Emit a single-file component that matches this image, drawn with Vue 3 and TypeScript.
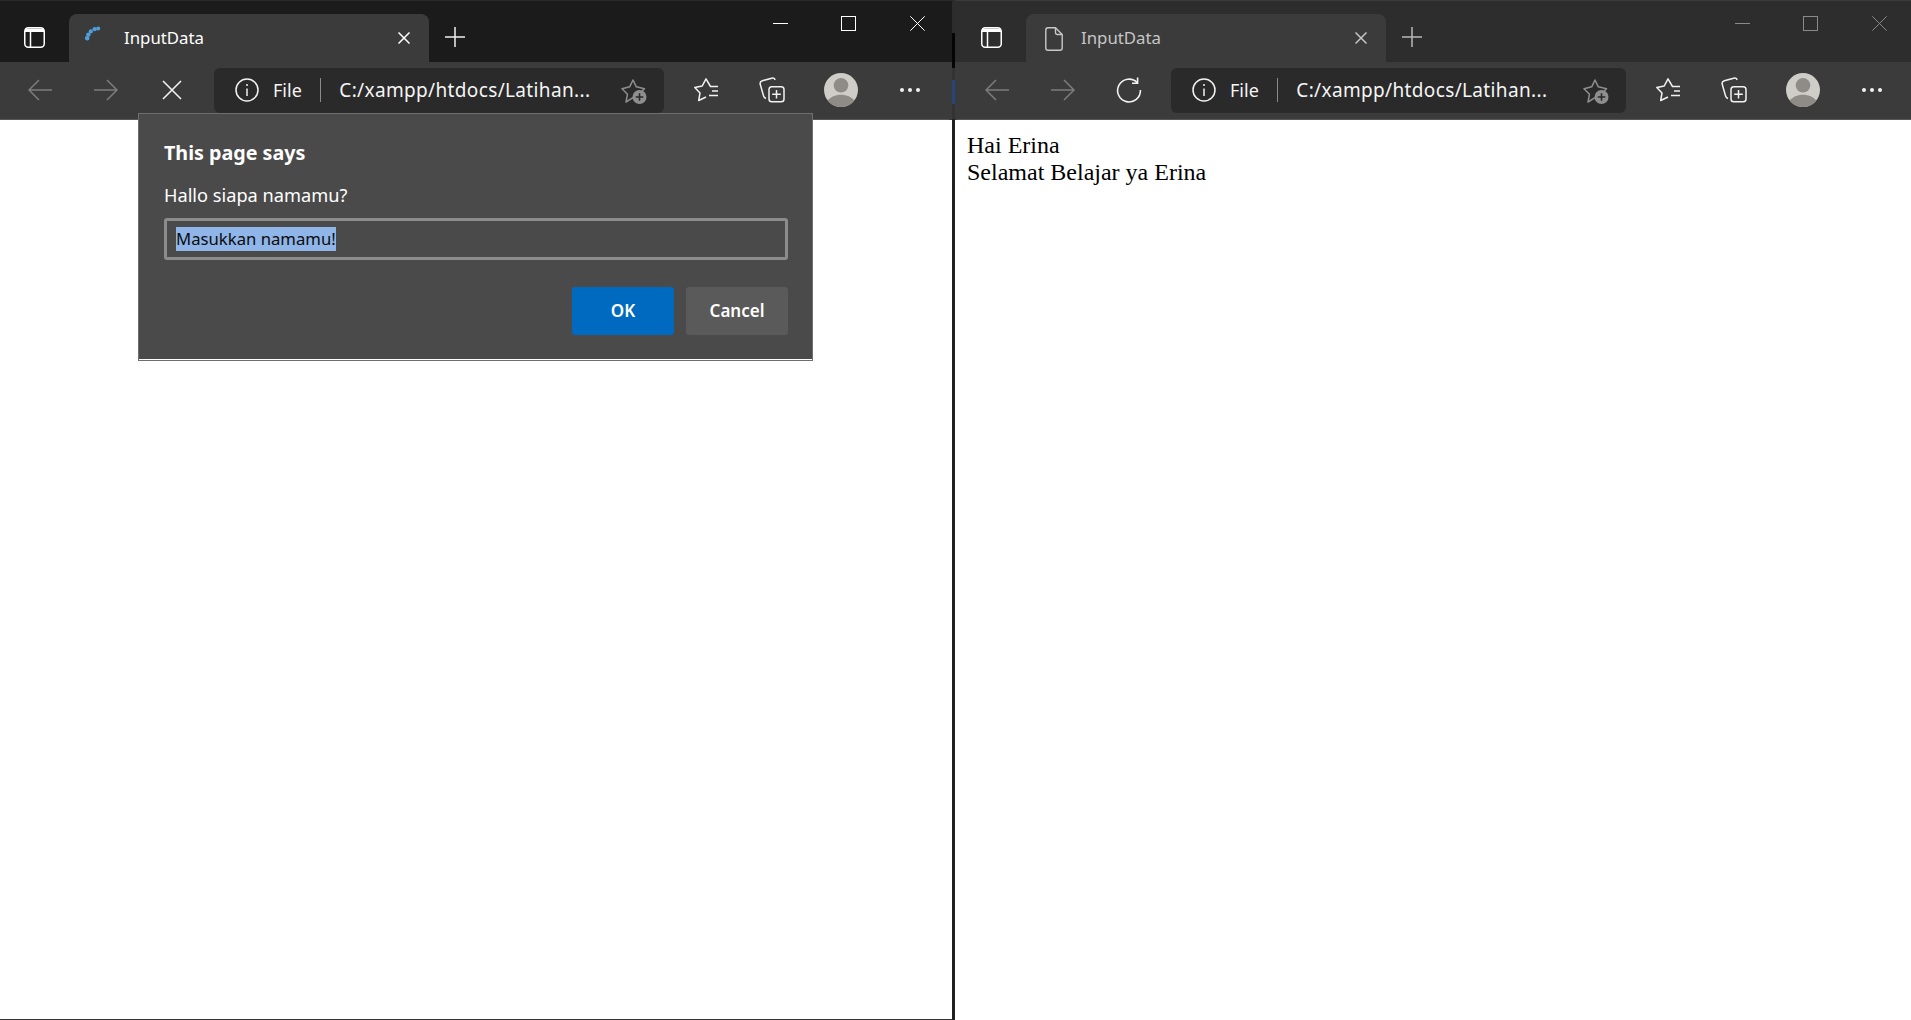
<script setup lang="ts">
interface BrowserWindow {
  key: string
  focused: boolean
  loading: boolean
  lines: string[]
}

const windows: BrowserWindow[] = [
  { key: 'prompt', focused: true, loading: true, lines: [] },
  { key: 'result', focused: false, loading: false, lines: ['Hai Erina', 'Selamat Belajar ya Erina'] },
]
</script>

<template>
  <div class="desktop">
    <template v-for="(win, i) in windows" :key="win.key">
      <div v-if="i > 0" class="seam"></div>
      <section class="win" :class="win.focused ? 'win--focused' : 'win--blurred'">
        <header class="titlebar">
          <span class="sidebar-btn">
            <svg width="21" height="21" viewBox="0 0 21 21" fill="none" stroke="#fff" stroke-width="1.5">
              <rect x=".75" y=".75" width="19.5" height="19.5" rx="3.5" />
              <path d="M1 1.5h19V5H1z" fill="#fff" stroke="none" />
              <path d="M6.5 5v15" />
            </svg>
          </span>
          <div class="tab">
            <svg v-if="win.loading" class="tab__icon" width="18" height="18" viewBox="0 0 18 18" fill="#4f9fdc">
              <circle cx="2.2" cy="13.2" r="2.3" />
              <circle cx="3.4" cy="9.6" r="2.2" />
              <circle cx="5.8" cy="6.4" r="2.1" />
              <circle cx="9.6" cy="4.2" r="2.1" />
              <circle cx="13.2" cy="3.4" r="2" />
            </svg>
            <svg v-else class="tab__icon tab__icon--doc" width="18" height="24" viewBox="0 0 18 24" fill="none" stroke="#c8c8c8" stroke-width="1.4" stroke-linejoin="round">
              <path d="M3 .8h7.5L17.2 7.5V21a2.2 2.2 0 0 1-2.2 2.2H3A2.2 2.2 0 0 1 .8 21V3A2.2 2.2 0 0 1 3 .8Z" />
              <path d="M10.5 .8v5a1.7 1.7 0 0 0 1.7 1.7h5" />
            </svg>
            <span class="tab__title">InputData</span>
            <svg class="tab__close" width="12" height="12" viewBox="0 0 12 12" stroke-width="1.5">
              <path d="M.5.5l11 11M11.5.5l-11 11" />
            </svg>
          </div>
          <svg class="newtab" width="20" height="20" viewBox="0 0 20 20" stroke-width="1.5">
            <path d="M10 0v20M0 10h20" />
          </svg>
          <div class="controls">
            <svg width="15" height="15" viewBox="0 0 15 15"><path d="M0 7.5h15" /></svg>
            <svg width="15" height="15" viewBox="0 0 15 15" fill="none"><rect x=".5" y=".5" width="14" height="14" /></svg>
            <svg class="controls__close" width="15" height="15" viewBox="0 0 15 15"><path d="M.3.3l14.4 14.4M14.7.3L.3 14.7" /></svg>
          </div>
        </header>

        <div class="toolbar">
          <span class="tool">
            <svg width="24" height="22" viewBox="0 0 24 22" fill="none" stroke="#7d7d7d" stroke-width="1.5">
              <path d="M24 11H1M11 1 1 11l10 10" />
            </svg>
          </span>
          <span class="tool">
            <svg width="24" height="22" viewBox="0 0 24 22" fill="none" stroke="#7d7d7d" stroke-width="1.5">
              <path d="M0 11h23M13 1l10 10-10 10" />
            </svg>
          </span>
          <span class="tool">
            <svg v-if="win.loading" width="20" height="20" viewBox="0 0 20 20" stroke="#f2f2f2" stroke-width="1.6">
              <path d="M1 1l18 18M19 1 1 19" />
            </svg>
            <svg v-else width="26" height="26" viewBox="0 0 26 26" fill="none" stroke="#f2f2f2" stroke-width="1.6">
              <path d="M21.2 5.6A11.4 11.4 0 1 0 24.4 13" />
              <path d="M21.6 .6v5.6h-5.6" />
            </svg>
          </span>

          <div class="address">
            <svg class="address__info" width="24" height="24" viewBox="0 0 24 24" fill="none" stroke="#f2f2f2" stroke-width="1.5">
              <circle cx="12" cy="12" r="11" />
              <path d="M12 10.5V18" />
              <circle cx="12" cy="7" r="1" fill="#f2f2f2" stroke="none" />
            </svg>
            <span class="address__scheme">File</span>
            <span class="address__rule"></span>
            <span class="address__url">C:/xampp/htdocs/Latihan...</span>
            <svg class="address__star" width="27" height="26" viewBox="0 0 27 26">
              <path d="M12 1 15.3 7.8 23.5 9.8 17.8 15.2 19.2 22 12 18.6 5 23 6.5 15.2 1 9.8 8.7 7.8Z" fill="none" stroke="#8e8e8e" stroke-width="1.5" stroke-linejoin="round" />
              <circle cx="18.5" cy="18" r="7" fill="#8e8e8e" />
              <path d="M18.5 14.2v7.6M14.7 18h7.6" stroke="#2a2a2a" stroke-width="1.6" />
            </svg>
          </div>

          <span class="tool tool--first">
            <svg width="24" height="24" viewBox="0 0 24 24" fill="none" stroke="#f2f2f2" stroke-width="1.5" stroke-linejoin="round">
              <path d="M24 8.5H16.5L12 .8 8.2 8 .8 9.5 6 15 4.7 22.5 12 19" />
              <path d="M18 13H24M15 17.5H24" />
            </svg>
          </span>
          <span class="tool">
            <svg width="26" height="26" viewBox="0 0 26 26" fill="none" stroke="#f2f2f2" stroke-width="1.5" stroke-linejoin="round">
              <path d="M7 21.5C5.8 21.2 5 20.3 4.6 19.1L1.3 7.5C.8 5.8 1.6 4.3 3.3 3.8L12.7 1.2C14.2 .8 15.6 1.5 16.2 2.9" />
              <rect x="10" y="9.8" width="15" height="15" rx="2.8" />
              <path d="M17.5 13v8.5M13.2 17.3h8.6" />
            </svg>
          </span>
          <span class="tool tool--profile">
            <svg width="34" height="34" viewBox="0 0 34 34">
              <circle cx="17" cy="17" r="17" fill="#cfcdc8" />
              <circle cx="17" cy="12.3" r="7.3" fill="#8f8c87" />
              <path d="M3.8 27.7C6.5 24 11 21.8 17 21.8S27.500 24 30.200 27.700A17 17 0 0 1 17 34 17 17 0 0 1 3.800 27.700Z" fill="#8f8c87" />
            </svg>
          </span>
          <span class="tool">
            <svg width="20" height="4" viewBox="0 0 20 4" fill="#f2f2f2">
              <circle cx="2" cy="2" r="2" />
              <circle cx="10" cy="2" r="2" />
              <circle cx="18" cy="2" r="2" />
            </svg>
          </span>
        </div>

        <main class="page">
          <div v-for="line in win.lines" :key="line">{{ line }}</div>
        </main>

        <div v-if="win.loading" class="dialog">
          <h2 class="dialog__title">This page says</h2>
          <p class="dialog__msg">Hallo siapa namamu?</p>
          <div class="dialog__input"><span class="dialog__selected">Masukkan namamu!</span></div>
          <div class="dialog__actions">
            <button type="button" class="dialog__btn dialog__btn--primary">OK</button>
            <button type="button" class="dialog__btn">Cancel</button>
          </div>
        </div>
      </section>
    </template>
  </div>
</template>

<style scoped>
.desktop {
  display: flex;
  height: 1020px;
  overflow: hidden;
  background: #fff;
  font-family: "Noto Sans", "Open Sans", sans-serif;
}

.seam {
  flex: 0 0 3px;
  background: linear-gradient(#2c2c2c 0 33px, #050505 33px 68px, #333 68px 80px, #26457c 80px 104px, #333 104px 119px, #202020 119px);
}

.win {
  position: relative;
  display: flex;
  flex-direction: column;
  box-sizing: border-box;
  height: 1020px;
}

.win--focused {
  flex: 0 0 952px;
  padding-right: 3px;
  background: #3b3b3b;
  border-bottom: 1px solid #333;
  --title-bg: #1b1b1b;
  --tab-text: #fff;
  --controls: #fff;
  --newtab: #f0f0f0;
}

.win--blurred {
  flex: 0 0 956px;
  padding-left: 2px;
  background: #3b3b3b;
  --title-bg: #2d2d2d;
  --tab-text: #c6c6c6;
  --controls: #8a8a8a;
  --newtab: #b8b8b8;
}

.win--focused .page {
  margin-right: -3px;
}

.win--blurred .page {
  margin-left: -2px;
}

.titlebar {
  display: flex;
  align-items: flex-start;
  height: 62px;
  margin: 0 -3px 0 0;
  padding-right: 3px;
  background: var(--title-bg);
  border-top: 1px solid #2b2b2b;
  box-sizing: border-box;
}

.win--blurred .titlebar {
  margin: 0 0 0 -2px;
  padding: 0 0 0 2px;
  border-top-color: #3a3a3a;
}

.sidebar-btn {
  flex: 0 0 69px;
  display: flex;
  justify-content: center;
  padding-top: 26px;
}

.tab {
  flex: 0 0 360px;
  display: flex;
  align-items: center;
  box-sizing: border-box;
  height: 48px;
  margin-top: 13px;
  padding: 0 19px 0 16px;
  background: #3b3b3b;
  border-radius: 8px 8px 0 0;
}

.tab__icon {
  flex: none;
  align-self: flex-start;
  margin-top: 11px;
}

.tab__icon--doc {
  margin: 13px 0 0 3px;
}

.tab__title {
  margin-left: 21px;
  flex: 1;
  color: var(--tab-text);
  font-size: 16.8px;
  line-height: 24px;
}

.tab__icon--doc + .tab__title {
  margin-left: 18px;
}

.tab__close {
  stroke: var(--tab-text);
}

.newtab {
  margin: 26px 0 0 16px;
  stroke: var(--newtab);
}

.controls {
  display: flex;
  gap: 53px;
  margin-left: auto;
  padding: 15px 24px 0 0;
  fill: none;
  stroke: var(--controls);
}

.controls__close {
  margin-left: 1px;
}

.toolbar {
  display: flex;
  align-items: center;
  box-sizing: border-box;
  height: 58px;
  padding: 0 6px 1px 7px;
  border-bottom: 1px solid #565656;
  background: #3b3b3b;
}

.tool {
  flex: 0 0 66px;
  display: flex;
  align-items: center;
  justify-content: center;
}

.tool--first {
  margin-left: 9px;
}

.tool--profile {
  flex-basis: 72px;
}

.address {
  flex: 1;
  min-width: 0;
  display: flex;
  align-items: center;
  height: 45px;
  margin-left: 9px;
  padding: 0 16px 0 21px;
  background: #2a2a2a;
  border-radius: 6px;
}

.address__info {
  flex: none;
}

.address__scheme {
  margin-left: 14px;
  color: #f5f5f5;
  font-size: 18px;
}

.address__rule {
  width: 1.5px;
  height: 24px;
  margin: 0 18px;
  background: #8a8a8a;
}

.address__url {
  flex: 1;
  color: #f5f5f5;
  font-size: 19px;
  letter-spacing: 0.35px;
  white-space: nowrap;
}

.address__star {
  flex: none;
  margin-top: 3px;
}

.page {
  flex: 1;
  padding: 12px;
  background: #fff;
  color: #000;
  font-family: "Liberation Serif", serif;
  font-size: 24px;
  line-height: 27px;
}

.dialog {
  position: absolute;
  top: 113px;
  left: 138px;
  box-sizing: border-box;
  width: 675px;
  height: 248px;
  padding: 25px 24px 0 25px;
  background: #4a4a4a;
  border: 1px solid #6e6e6e;
  box-shadow: inset 0 -1px 0 #fff;
}

.dialog__title {
  margin: 0;
  color: #fff;
  font-size: 19.7px;
  font-weight: 700;
  line-height: 27px;
}

.dialog__msg {
  margin: 16px 0 0;
  color: #fff;
  font-size: 18.2px;
  line-height: 26px;
}

.dialog__input {
  display: flex;
  align-items: center;
  box-sizing: border-box;
  height: 42px;
  margin-top: 10px;
  padding-left: 9px;
  border: 3px solid #8c8c8c;
  border-radius: 3px;
}

.dialog__selected {
  background: #90b5e8;
  color: #0c0c0c;
  font-size: 16.7px;
  line-height: 24px;
}

.dialog__actions {
  display: flex;
  justify-content: flex-end;
  gap: 12px;
  margin-top: 27px;
}

.dialog__btn {
  width: 102px;
  height: 48px;
  padding: 0 0 2px;
  border: 0;
  border-radius: 3px;
  background: #5a5a5a;
  color: #fff;
  font-family: inherit;
  font-size: 17px;
  font-weight: 600;
}

.dialog__btn--primary {
  background: #0069c0;
}
</style>

<style>
html,
body {
  margin: 0;
  background: #fff;
}
</style>
